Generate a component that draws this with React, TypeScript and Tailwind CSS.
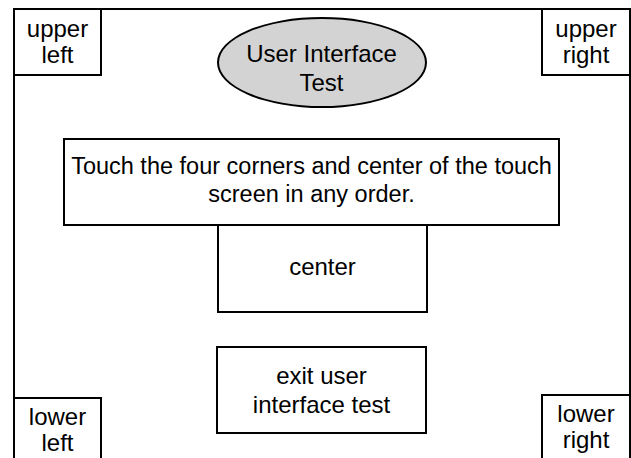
const corner = "flex flex-col items-center shrink-0 text-[24px] leading-[26px] text-black";

export default function App() {
  return (
    <div
      className="w-[631px] h-[458px] overflow-hidden bg-white pl-[13px] pt-[8px]"
      style={{ fontFamily: '"Liberation Sans", Arial, sans-serif' }}
    >
      <div className="w-[618px] border-t-2 border-l-2 border-r-2 border-black flex flex-col">
        {/* top row */}
        <div className="flex justify-between items-start shrink-0">
          <div className={`${corner} w-[87px] h-[66px] border-r-2 border-b-2 border-black justify-center`}>
            <span>upper</span>
            <span>left</span>
          </div>
          <div className="mt-[7px] w-[210px] h-[91px] shrink-0 rounded-[50%] border-2 border-black bg-[#d3d3d3] flex flex-col items-center justify-center pt-[10px] text-[24px] leading-[29px] text-black">
            <span>User Interface</span>
            <span>Test</span>
          </div>
          <div className={`${corner} w-[88px] h-[66px] border-l-2 border-b-2 border-black justify-center`}>
            <span>upper</span>
            <span>right</span>
          </div>
        </div>

        {/* instructions */}
        <div className="ml-[48px] mt-[30px] w-[497px] h-[88px] shrink-0 border-2 border-black flex flex-col items-center justify-center text-[23.5px] leading-[28px] text-black pb-[4px]">
          <span>Touch the four corners and center of the touch</span>
          <span>screen in any order.</span>
        </div>

        {/* center target */}
        <div className="ml-[202px] w-[211px] h-[87px] shrink-0 border-x-2 border-b-2 border-black flex items-center justify-center text-[24px] text-black pb-[4px]">
          center
        </div>

        {/* bottom row */}
        <div className="mt-[33px] flex justify-between items-start shrink-0">
          <div className={`${corner} mt-[51px] w-[87px] h-[80px] border-t-2 border-r-2 border-black pt-[5px]`}>
            <span>lower</span>
            <span>left</span>
          </div>
          <div className="w-[211px] h-[88px] shrink-0 border-2 border-black flex flex-col items-center justify-center text-[24px] leading-[29px] text-black">
            <span>exit user</span>
            <span>interface test</span>
          </div>
          <div className={`${corner} mt-[48px] w-[88px] h-[80px] border-t-2 border-l-2 border-black pt-[5px]`}>
            <span>lower</span>
            <span>right</span>
          </div>
        </div>
      </div>
    </div>
  );
}
